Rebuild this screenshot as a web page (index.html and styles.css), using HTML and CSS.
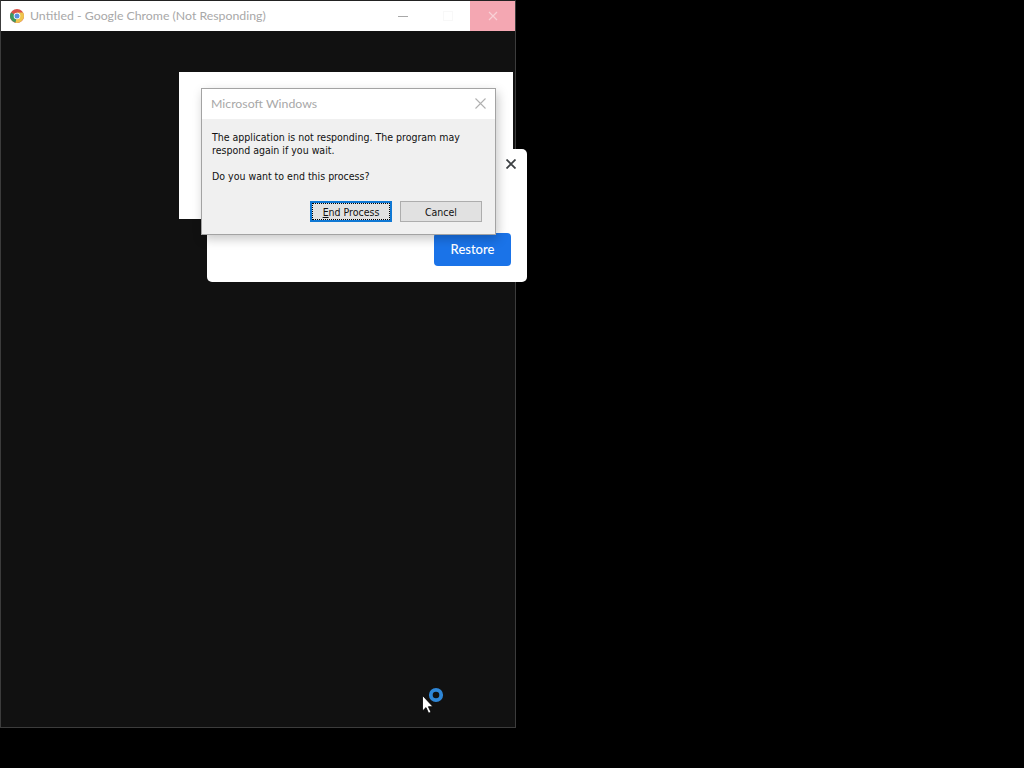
FILE: index.html
```html
<!DOCTYPE html>
<html lang="en">
<head>
<meta charset="utf-8">
<title>Untitled - Google Chrome (Not Responding)</title>
<link rel="stylesheet" href="styles.css">
</head>
<body>
<div class="desktop">
  <div class="chrome-window">
    <div class="titlebar">
      <svg class="chrome-logo" width="14" height="14" viewBox="0 0 14 14">
        <circle cx="7" cy="7" r="7" fill="#d9534a"/>
        <path d="M7 7 L1 3.5 A7 7 0 0 0 5.5 13.8 Z" fill="#3d9a5f"/>
        <path d="M7 7 L5.5 13.8 A7 7 0 0 0 13 3.5 L7 3.5 Z" fill="#eec54e"/>
        <circle cx="7" cy="7" r="3.3" fill="#fff"/>
        <circle cx="7" cy="7" r="2.5" fill="#5a8fdc"/>
      </svg>
      <span class="title-text">Untitled - Google Chrome (Not Responding)</span>
      <div class="caption">
        <div class="cap-btn"><span class="min-glyph"></span></div>
        <div class="cap-btn"><span class="max-glyph"></span></div>
        <div class="cap-btn close">
          <svg width="10" height="10" viewBox="0 0 10 10"><path d="M1 1 L9 9 M9 1 L1 9" stroke="#f8d0d6" stroke-width="1.2"/></svg>
        </div>
      </div>
    </div>
    <div class="content"></div>
  </div>

  <div class="white-panel"></div>

  <div class="restore-dialog">
    <svg class="restore-x" width="10" height="10" viewBox="0 0 10 10"><path d="M0.5 0.5 L9.5 9.5 M9.5 0.5 L0.5 9.5" stroke="#3c4043" stroke-width="1.8"/></svg>
    <button class="restore-btn">Restore</button>
  </div>

  <div class="win-dialog">
    <div class="win-head">
      <span class="win-title">Microsoft Windows</span>
      <svg width="11" height="11" viewBox="0 0 11 11"><path d="M0.5 0.5 L10.5 10.5 M10.5 0.5 L0.5 10.5" stroke="#b0b0b0" stroke-width="1.1"/></svg>
    </div>
    <div class="win-body">
      <p class="msg">The application is not responding. The program may<br>respond again if you wait.</p>
      <p class="msg">Do you want to end this process?</p>
      <div class="win-actions">
        <button class="win-btn primary"><span class="focus-ring"><u>E</u>nd Process</span></button>
        <button class="win-btn">Cancel</button>
      </div>
    </div>
  </div>

  <svg class="spinner" width="16" height="16" viewBox="0 0 16 16"><circle cx="8" cy="8" r="5.2" fill="none" stroke="#2e86d6" stroke-width="3.8"/></svg>
  <svg class="cursor" width="12" height="19" viewBox="0 0 12 19"><path d="M0.5 0.5 V16 L4 12.6 L6.6 18.2 L9 17.2 L6.4 11.7 H11 Z" fill="#fff" stroke="#000" stroke-width="0.8"/></svg>
</div>
</body>
</html>
```
FILE: styles.css
```css
* { box-sizing: border-box; }
html, body { margin: 0; padding: 0; background: #000; }
.desktop { position: relative; width: 1024px; height: 768px; background: #000; overflow: hidden; }

.chrome-window {
  position: absolute; left: 0; top: 0; width: 516px; height: 728px;
  display: flex; flex-direction: column;
  border: 1px solid #3c3c3c; border-top-color: #222; background: #111111;
}
.titlebar { height: 30px; background: #fff; display: flex; align-items: center; padding-left: 9px; flex: none; }
.chrome-logo { flex: none; }
.title-text { margin-left: 6px; padding-bottom: 2px; font: 12.3px "Lato", "Liberation Sans", sans-serif; color: #a8a8a8; }
.caption { margin-left: auto; display: flex; height: 100%; }
.cap-btn { width: 45px; display: flex; align-items: center; justify-content: center; }
.min-glyph { width: 10px; height: 1px; background: #a8a8a8; }
.max-glyph { width: 10px; height: 10px; border: 1px solid #f8f8f8; }
.close { background: #f4a7b2; }
.content { flex: 1; background: #111111; }

.white-panel { position: absolute; left: 179px; top: 72px; width: 334px; height: 147px; background: #fff; }

.restore-dialog {
  position: absolute; left: 207px; top: 149px; width: 320px; height: 133px;
  background: #fff; border-radius: 5px;
}
.restore-x { position: absolute; right: 11px; top: 10px; }
.restore-btn {
  position: absolute; left: 227px; top: 84px; width: 77px; height: 33px;
  border: 0; border-radius: 4px; background: #1a73e8; color: #fff;
  font: 500 13px "Lato", "Liberation Sans", sans-serif; padding: 0 0 1px;
}

.win-dialog {
  position: absolute; left: 201px; top: 88px; width: 295px; height: 147px;
  border: 1px solid #a3a3a3; background: #f0f0f0;
  box-shadow: 2px 4px 10px rgba(0,0,0,0.22);
  display: flex; flex-direction: column;
}
.win-head {
  height: 30px; flex: none; background: #fff;
  display: flex; align-items: center; justify-content: space-between;
  padding: 0 9px 2px 9px;
}
.win-title { font: 12.3px "Lato", "Liberation Sans", sans-serif; color: #a8a8a8; }
.win-body { flex: 1; padding: 12px 13px 12px 10px; display: flex; flex-direction: column; }
.msg { margin: 0 0 13px; font: 10.5px/13px "DejaVu Sans Condensed", "DejaVu Sans", "Liberation Sans", sans-serif; font-stretch: condensed; color: #111; white-space: nowrap; }
.win-actions { margin-top: auto; display: flex; justify-content: flex-end; gap: 8px; }
.win-btn {
  width: 82px; height: 21px; padding: 0;
  border: 1px solid #adadad; background: #e1e1e1; color: #111;
  font: 10.5px "DejaVu Sans Condensed", "DejaVu Sans", "Liberation Sans", sans-serif;
  font-stretch: condensed;
}
.win-btn.primary { border: 2px solid #0f78d4; padding: 0; }
.focus-ring { display: flex; align-items: center; justify-content: center; height: 100%; border: 1px dotted #000; }
.win-btn.primary u { text-decoration: underline; }

.spinner { position: absolute; left: 428px; top: 687px; }
.cursor { position: absolute; left: 422px; top: 695px; }
```
